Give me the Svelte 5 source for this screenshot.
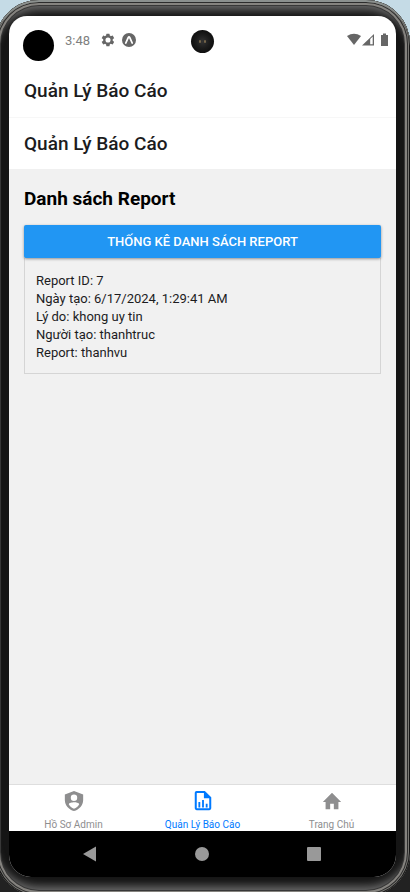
<script>
  const report = [
    'Report ID: 7',
    'Ngày tạo: 6/17/2024, 1:29:41 AM',
    'Lý do: khong uy tin',
    'Người tạo: thanhtruc',
    'Report: thanhvu'
  ];
</script>

<div class="desk">
  <div class="phone">
    <div class="screen">
      <header class="status">
        <span class="hole"></span>
        <span class="time">3:48</span>
        <svg class="gear" width="14" height="14" viewBox="1 1 22 22" aria-hidden="true"><path fill="#666" fill-rule="evenodd" d="M19.4 13a7.800 7.800 0 0 0 0-2l2.100-1.600a.5.5 0 0 0 .1-.7l-2-3.400a.5.5 0 0 0-.6-.2l-2.500 1a7 7 0 0 0-1.700-1l-.4-2.700a.5.5 0 0 0-.5-.4h-4a.5.5 0 0 0-.5.4L9 5.100a7 7 0 0 0-1.700 1l-2.500-1a.5.5 0 0 0-.6.2l-2 3.400a.5.5 0 0 0 .1.700L4.500 11a8 8 0 0 0 0 2l-2.200 1.600a.5.5 0 0 0-.1.700l2 3.400c.1.200.4.300.6.200l2.500-1a7 7 0 0 0 1.700 1l.4 2.700c0 .2.200.4.500.4h4c.3 0 .5-.2.5-.4l.4-2.700a7 7 0 0 0 1.700-1l2.500 1c.2.100.5 0 .6-.2l2-3.400a.5.5 0 0 0-.1-.7zM12 16a4 4 0 1 1 0-8 4 4 0 0 1 0 8z"/></svg>
        <svg class="expo" width="14" height="14" viewBox="0 0 14 14" aria-hidden="true"><circle cx="7" cy="7" r="7" fill="#666"/><path d="M3.800 10 6.200 4.600Q7 3.200 7.800 4.600L10.200 10" fill="none" stroke="#fff" stroke-width="1.800" stroke-linecap="round"/></svg>
        <span class="camera"><i></i><i></i></span>
        <svg class="signals" width="41" height="14" viewBox="0 0 41 14" aria-hidden="true">
          <path fill="#666" d="M0 3Q7-1.500 14 3L7 12z"/>
          <path fill="#666" d="M15 12.500 27 1v11.500zM23.200 6v5.300h2.500V3.500z" fill-rule="evenodd"/>
          <path fill="#666" d="M34 2h2V.5h3V2h2v11h-7z"/>
        </svg>
      </header>
      <h1 class="bar first">Quản Lý Báo Cáo</h1>
      <h2 class="bar second">Quản Lý Báo Cáo</h2>
      <main>
        <h3>Danh sách Report</h3>
        <button class="stats" type="button">THỐNG KÊ DANH SÁCH REPORT</button>
        <article>
          {#each report as line}
            <p>{line}</p>
          {/each}
        </article>
      </main>
      <nav class="tabs">
        <a href="#admin">
          <svg width="22" height="22" viewBox="0 0 24 24" aria-hidden="true"><path fill="#8e8e8f" fill-rule="evenodd" d="M12 1 2 5v6c0 5.550 4.300 10.740 10 12 5.700-1.260 10-6.450 10-12V5zM12 5a3.500 3.500 0 1 1 0 7 3.500 3.500 0 0 1 0-7zM12 20.500c-2.500-.8-4.500-2.600-5.700-5 .1-1.300 3.800-2.100 5.700-2.100s5.600.8 5.700 2.100c-1.200 2.400-3.200 4.200-5.700 5z"/></svg>
          <span>Hồ Sơ Admin</span>
        </a>
        <a href="#reports" class="active" aria-current="page">
          <svg width="22" height="22" viewBox="0 0 24 24" aria-hidden="true"><path fill="#007aff" fill-rule="evenodd" d="M5 1h9l7 7v12a2 2 0 0 1-2 2H5a2 2 0 0 1-2-2V3a2 2 0 0 1 2-2zM5.200 3.200v16.600h13.600V9H13V3.200zM7 13h2v6H7zM11 11h2v8h-2zM15 15h2v4h-2z"/></svg>
          <span>Quản Lý Báo Cáo</span>
        </a>
        <a href="#home">
          <svg width="22" height="22" viewBox="0 0 24 24" aria-hidden="true"><path fill="#8e8e8f" d="M10 21v-6h4v6h5v-8h3L12 3 2 13h3v8z"/></svg>
          <span>Trang Chủ</span>
        </a>
      </nav>
      <footer class="system">
        <button type="button" aria-label="Back"><svg width="16" height="16" viewBox="0 0 16 16"><path d="M1 8 14 0.500v15z" fill="#999"/></svg></button>
        <button type="button" aria-label="Home"><svg width="16" height="16" viewBox="0 0 16 16"><circle cx="8" cy="8" r="7" fill="#999"/></svg></button>
        <button type="button" aria-label="Overview"><svg width="16" height="16" viewBox="0 0 16 16"><rect x="1" y="1" width="14" height="14" rx="1" fill="#999"/></svg></button>
      </footer>
    </div>
  </div>
</div>

<style>
  .desk {
    box-sizing: border-box;
    height: 100vh;
    overflow: hidden;
    background: linear-gradient(#c5dbe6 0 60px, #222 60px);
    font-family: Roboto, sans-serif;
    color: #1c1c1e;
  }
  .phone {
    box-sizing: border-box;
    height: calc(100vh + 4px);
    margin-left: -5px;
    padding: 16px 14px 19px 14px;
    border-radius: 44px;
    display: flex;
    background: #151515;
    box-shadow:
      inset 0 2px 0 #8b908e,
      inset 0 0 0 1px #161616,
      inset 0 0 0 2px #777672,
      inset 0 0 0 3px #2c2c2c,
      inset 0 0 0 5px #85837f,
      inset 0 0 0 6px #383838,
      inset 0 12px 8px -2px #6a6a6a,
      inset 0 -12px 8px -2px #6a6a6a;
  }
  .screen {
    flex: 1;
    min-width: 0;
    display: flex;
    flex-direction: column;
    overflow: hidden;
    border-radius: 18px 18px 22px 22px;
    background: #fff;
  }
  .status {
    position: relative;
    display: flex;
    align-items: center;
    height: 49px;
    padding: 0 8px 0 14px;
  }
  .hole {
    width: 31px;
    height: 31px;
    margin-top: 9px;
    border-radius: 50%;
    background: #000;
  }
  .time {
    margin: 0 11px 0 11px;
    font-size: 13px;
    line-height: 16px;
    color: #808080;
  }
  .gear, .signals { margin-bottom: 2px; }
  .expo { margin: 0 0 2px 7px; }
  .signals { margin-left: auto; }
  .camera {
    position: absolute;
    top: 14px;
    left: 50%;
    margin-left: -12px;
    width: 23px;
    height: 23px;
    border-radius: 50%;
    background: radial-gradient(#333, #1c1c1c 40%, #111 65%);
    display: flex;
    align-items: center;
    justify-content: center;
    gap: 3px;
  }
  .camera i {
    width: 2px;
    height: 3px;
    border-radius: 1px;
    background: #75654a;
  }
  h1, h2, h3, p { margin: 0; }
  .bar {
    box-sizing: border-box;
    padding: 0 15px;
    font-size: 19px;
    font-weight: 500;
  }
  .first {
    height: 53px;
    line-height: 52px;
    border-bottom: 1px solid #f7f7f7;
  }
  .second {
    height: 52px;
    line-height: 52px;
    border-bottom: 1px solid #f0f0f0;
  }
  main {
    flex: 1;
    padding: 15px;
    background: #f1f1f1;
    color: #000;
  }
  h3 {
    margin-bottom: 13px;
    font-size: 19px;
    line-height: 27px;
    font-weight: 700;
  }
  .stats {
    position: relative;
    display: block;
    width: 100%;
    height: 33px;
    padding: 0;
    border: 0;
    border-radius: 2px;
    background: #2196f3;
    box-shadow: 0 1px 3px rgba(0, 0, 0, 0.4);
    color: #fff;
    font: 500 13px/34px Roboto, sans-serif;
  }
  article {
    padding: 14px 11px 11px;
    border: 1px solid #d5d5d5;
    border-top: 0;
  }
  article p {
    font-size: 13px;
    line-height: 18px;
    color: #1c1c1e;
  }
  .tabs {
    display: flex;
    height: 46px;
    border-top: 1px solid #dedede;
  }
  .tabs a {
    flex: 1;
    display: flex;
    flex-direction: column;
    align-items: center;
    padding-top: 5px;
    color: #8e8e8f;
    font-size: 10px;
    line-height: 12px;
    text-decoration: none;
  }
  .tabs svg { margin-bottom: 7px; }
  .tabs a.active { color: #007aff; }
  .system {
    display: flex;
    align-items: center;
    justify-content: space-between;
    height: 46px;
    padding: 0 74px 0 73px;
    background: #000;
  }
  .system button {
    display: flex;
    padding: 0;
    border: 0;
    background: none;
  }
</style>
